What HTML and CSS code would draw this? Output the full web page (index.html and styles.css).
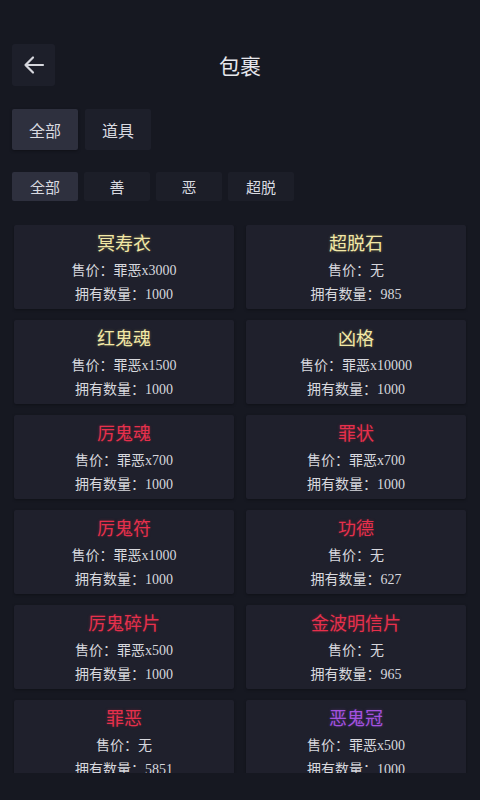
FILE: index.html
```html
<!DOCTYPE html>
<html lang="zh">
<head>
<meta charset="utf-8">
<link rel="stylesheet" href="styles.css">
</head>
<body>
<div class="app">
  <header class="topbar">
    <button class="back" aria-label="返回">
      <svg width="26" height="26" viewBox="0 0 26 26"><path d="M22 13H4.5M12 5.5L4.5 13l7.5 7.5" fill="none" stroke="#d6d7dd" stroke-width="2.2" stroke-linecap="round" stroke-linejoin="round"/></svg>
    </button>
    <h1 class="title">包裹</h1>
  </header>
  <nav class="tabs">
    <span class="tab on">全部</span>
    <span class="tab">道具</span>
  </nav>
  <nav class="filters">
    <span class="filter on">全部</span>
    <span class="filter">善</span>
    <span class="filter">恶</span>
    <span class="filter">超脱</span>
  </nav>
  <div class="list">
    <div class="grid">
      <div class="card"><div class="name gold">冥寿衣</div><div class="line">售价：罪恶x3000</div><div class="line">拥有数量：1000</div></div>
      <div class="card"><div class="name gold">超脱石</div><div class="line">售价：无</div><div class="line">拥有数量：985</div></div>
      <div class="card"><div class="name gold">红鬼魂</div><div class="line">售价：罪恶x1500</div><div class="line">拥有数量：1000</div></div>
      <div class="card"><div class="name gold">凶格</div><div class="line">售价：罪恶x10000</div><div class="line">拥有数量：1000</div></div>
      <div class="card"><div class="name red">厉鬼魂</div><div class="line">售价：罪恶x700</div><div class="line">拥有数量：1000</div></div>
      <div class="card"><div class="name red">罪状</div><div class="line">售价：罪恶x700</div><div class="line">拥有数量：1000</div></div>
      <div class="card"><div class="name red">厉鬼符</div><div class="line">售价：罪恶x1000</div><div class="line">拥有数量：1000</div></div>
      <div class="card"><div class="name red">功德</div><div class="line">售价：无</div><div class="line">拥有数量：627</div></div>
      <div class="card"><div class="name red">厉鬼碎片</div><div class="line">售价：罪恶x500</div><div class="line">拥有数量：1000</div></div>
      <div class="card"><div class="name red">金波明信片</div><div class="line">售价：无</div><div class="line">拥有数量：965</div></div>
      <div class="card"><div class="name red">罪恶</div><div class="line">售价：无</div><div class="line">拥有数量：5851</div></div>
      <div class="card"><div class="name purple">恶鬼冠</div><div class="line">售价：罪恶x500</div><div class="line">拥有数量：1000</div></div>
    </div>
  </div>
</div>
</body>
</html>
```
FILE: styles.css
```css
* { box-sizing: border-box; }
html, body { margin: 0; padding: 0; }
body {
  background: #161821;
  width: 480px;
  height: 800px;
  overflow: hidden;
  font-family: "Liberation Serif", "Noto Sans CJK SC", serif;
  color: #d9dae0;
}
.app { padding: 44px 12px 0 12px; }
.topbar {
  display: flex;
  align-items: center;
  height: 42px;
  position: relative;
}
.back {
  width: 43px;
  height: 42px;
  border: 0;
  padding: 0;
  background: #1d1f2a;
  border-radius: 3px;
  display: flex;
  align-items: center;
  justify-content: center;
}
.title {
  position: absolute;
  left: 0; right: 0;
  text-align: center;
  margin: 0;
  font-size: 21px;
  font-weight: 400;
  color: #e6e7ec;
  pointer-events: none;
}
.tabs { display: flex; gap: 7px; margin-top: 23px; }
.tab {
  width: 66px; height: 41px;
  display: flex; align-items: center; justify-content: center;
  background: #1d1f2a;
  font-size: 16px;
  color: #d9dae0;
  border-radius: 2px;
}
.tab.on { background: #2e303e; box-shadow: 0 1px 3px rgba(0,0,0,.35); }
.filters { display: flex; gap: 6px; margin-top: 22px; }
.filter {
  width: 66px; height: 29px;
  display: flex; align-items: center; justify-content: center;
  background: #1c1e28;
  font-size: 15px;
  color: #d9dae0;
  border-radius: 2px;
}
.filter.on { background: #2e303e; }
.list {
  margin-top: 24px;
  height: 548px;
  overflow: hidden;
  padding: 0 2px;
}
.grid {
  display: grid;
  grid-template-columns: 220px 220px;
  column-gap: 12px;
  row-gap: 11px;
}
.card {
  height: 84px;
  background: #1f202c;
  border-radius: 2px;
  display: flex;
  flex-direction: column;
  align-items: center;
  padding-top: 7px;
  box-shadow: 0 1px 3px rgba(0,0,0,.3);
}
.name {
  font-size: 18px;
  line-height: 24px;
  height: 27px;
}
.gold { color: #f2e8a6; text-shadow: 0 0 3px rgba(240,220,120,.35); }
.red { color: #e6304c; text-shadow: 0 0 3px rgba(230,40,70,.35); }
.purple { color: #a452e0; text-shadow: 0 0 3px rgba(160,80,220,.4); }
.line {
  font-size: 14px;
  line-height: 24px;
  color: #d7d8de;
}
```
